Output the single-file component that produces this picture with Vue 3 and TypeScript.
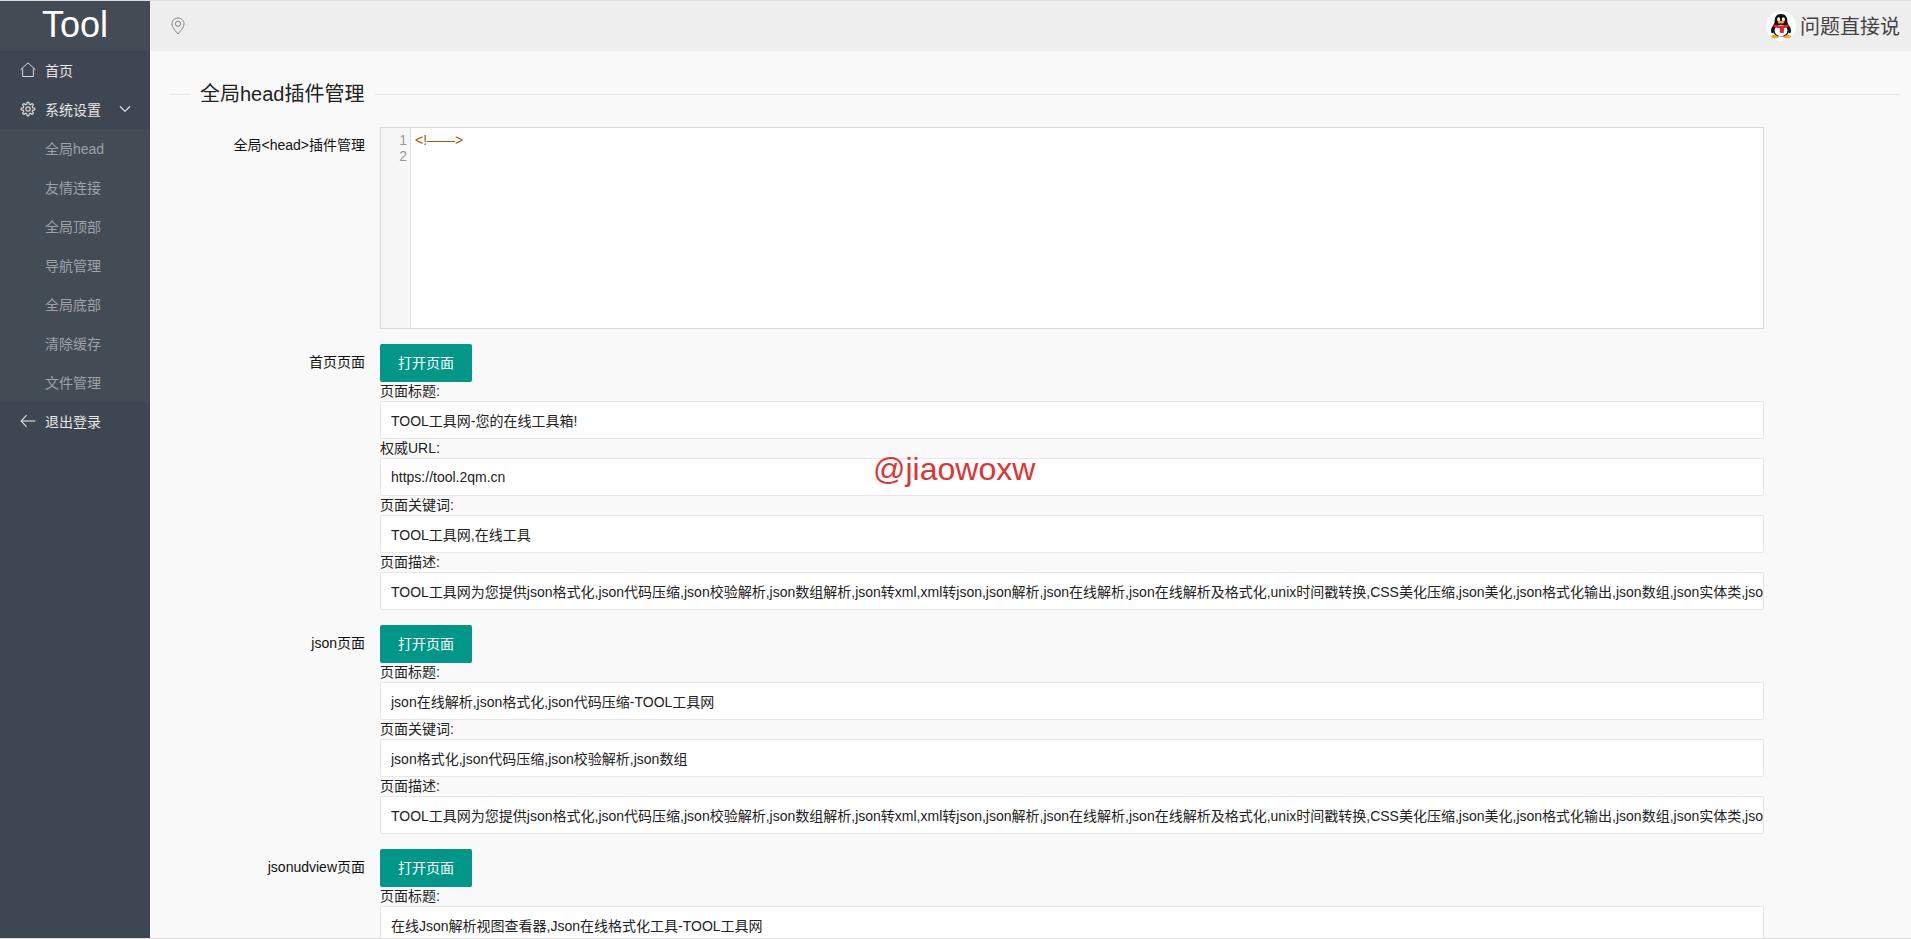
<script setup lang="ts">
interface Field {
  label: string;
  value: string;
}

interface PageGroup {
  name: string;
  fields: Field[];
}

const longDesc =
  'TOOL工具网为您提供json格式化,json代码压缩,json校验解析,json数组解析,json转xml,xml转json,json解析,json在线解析,json在线解析及格式化,unix时间戳转换,CSS美化压缩,json美化,json格式化输出,json数组,json实体类,json在线工具';

const subMenu = ['全局head', '友情连接', '全局顶部', '导航管理', '全局底部', '清除缓存', '文件管理'];

const groups: PageGroup[] = [
  {
    name: '首页页面',
    fields: [
      { label: '页面标题:', value: 'TOOL工具网-您的在线工具箱!' },
      { label: '权威URL:', value: 'https://tool.2qm.cn' },
      { label: '页面关键词:', value: 'TOOL工具网,在线工具' },
      { label: '页面描述:', value: longDesc },
    ],
  },
  {
    name: 'json页面',
    fields: [
      { label: '页面标题:', value: 'json在线解析,json格式化,json代码压缩-TOOL工具网' },
      { label: '页面关键词:', value: 'json格式化,json代码压缩,json校验解析,json数组' },
      { label: '页面描述:', value: longDesc },
    ],
  },
  {
    name: 'jsonudview页面',
    fields: [{ label: '页面标题:', value: '在线Json解析视图查看器,Json在线格式化工具-TOOL工具网' }],
  },
];

// outline of the settings cog, eight rounded teeth
const gearPath = (() => {
  const pts: string[] = [];
  const teeth = 8;
  for (let i = 0; i < teeth; i++) {
    const a = (i / teeth) * Math.PI * 2;
    const step = Math.PI / teeth;
    const p = (r: number, t: number) => `${(8 + r * Math.cos(t)).toFixed(2)} ${(8 + r * Math.sin(t)).toFixed(2)}`;
    pts.push(`${i === 0 ? 'M' : 'L'}${p(5, a - step * 0.6)}`);
    pts.push(`L${p(6.6, a - step * 0.4)}`);
    pts.push(`Q${p(7.4, a)} ${p(6.6, a + step * 0.4)}`);
    pts.push(`L${p(5, a + step * 0.6)}`);
  }
  return pts.join(' ') + ' Z';
})();
</script>

<template>
  <div class="shell">
    <aside class="side">
      <div class="logo">Tool</div>
      <a class="nav-item">
        <svg class="nav-icon" width="16" height="16" viewBox="0 0 16 16" fill="none" stroke="currentColor" stroke-width="1">
          <path d="M0.5 7.8 8 0.8l7.5 7" />
          <path d="M2.6 6.4v8.1h10.8V6.4" />
        </svg>
        <span>首页</span>
      </a>
      <a class="nav-item">
        <svg class="nav-icon" width="16" height="16" viewBox="0 0 16 16" fill="none" stroke="currentColor" stroke-width="1.2">
          <path :d="gearPath" />
          <circle cx="8" cy="8" r="2.2" />
        </svg>
        <span>系统设置</span>
        <svg class="nav-more" width="12" height="8" viewBox="0 0 12 8" fill="none" stroke="currentColor" stroke-width="1.3">
          <path d="M1 1.2 6 6.4l5-5.2" />
        </svg>
      </a>
      <a v-for="item in subMenu" :key="item" class="sub-item">{{ item }}</a>
      <a class="nav-item nav-bottom">
        <svg class="nav-icon" width="16" height="16" viewBox="0 0 16 16" fill="none" stroke="currentColor" stroke-width="1.2">
          <path d="M6.6 2.2 1.2 8l5.4 5.8" />
          <path d="M1.4 8h14" />
        </svg>
        <span>退出登录</span>
      </a>
    </aside>

    <div class="main">
      <header class="top">
        <svg class="loc" width="14" height="18" viewBox="0 0 14 18" fill="none" stroke="currentColor" stroke-width="1">
          <path d="M7 17C4.6 13.8 1 10.6 1 6.8 1 3.4 3.7 1 7 1s6 2.4 6 5.8c0 3.8-3.6 7-6 10.200Z" />
          <circle cx="7" cy="6.8" r="2.6" />
        </svg>
        <div class="ask">
          <span class="qq">
            <svg width="24" height="26" viewBox="0 0 24 26">
              <ellipse cx="6" cy="23.500" rx="4" ry="1.800" fill="#f5a623" />
              <ellipse cx="18" cy="23.500" rx="4" ry="1.800" fill="#f5a623" />
              <path d="M12 1c4.600 0 6.400 3.400 6.400 7.400 0 1.600.6 2.600 1.600 4 1.400 2 2.400 4.600 1.800 6.800-.4 1.400-1.400 1-2.200.2-.8 2.400-3.600 4-7.600 4s-6.800-1.600-7.600-4c-.8.800-1.800 1.200-2.200-.2C1.600 17 2.600 14.400 4 12.400c1-1.400 1.600-2.400 1.600-4C5.600 4.400 7.400 1 12 1Z" fill="#111" />
              <ellipse cx="12" cy="17.500" rx="6.400" ry="5.800" fill="#fff" />
              <ellipse cx="9.600" cy="6.400" rx="1.500" ry="2.100" fill="#fff" />
              <ellipse cx="14.400" cy="6.400" rx="1.500" ry="2.100" fill="#fff" />
              <ellipse cx="12" cy="9.200" rx="3.400" ry="1.400" fill="#f5a623" />
              <path d="M4.600 11.200c4.600 1.800 10.200 1.800 14.800 0l.6 2.400c-1.600.8-3.400 1.200-4.800 1.400l-.2 0-.2 5-4-.2v-4.800C8.200 14.800 6 14.400 4.200 13.400Z" fill="#e8202a" />
            </svg>
          </span>
          <span class="ask-text">问题直接说</span>
        </div>
      </header>

      <div class="content">
        <fieldset class="box">
          <legend>全局head插件管理</legend>

          <div class="form-item">
            <label class="form-label">全局&lt;head&gt;插件管理</label>
            <div class="editor">
              <div class="gutter">
                <div>1</div>
                <div>2</div>
              </div>
              <div class="code">&lt;!——&gt;</div>
            </div>
          </div>

          <div v-for="group in groups" :key="group.name" class="form-item">
            <label class="form-label">{{ group.name }}</label>
            <div class="form-block">
              <button type="button" class="btn">打开页面</button>
              <template v-for="field in group.fields" :key="field.label">
                <div class="field-label">{{ field.label }}</div>
                <input class="input" type="text" readonly :value="field.value" />
              </template>
            </div>
          </div>
        </fieldset>
      </div>
    </div>

    <div class="watermark">@jiaowoxw</div>
  </div>
</template>

<style scoped>
.shell {
  position: relative;
  display: flex;
  height: 939px;
  box-sizing: border-box;
  overflow: hidden;
  border-top: 1px solid #ddd;
  border-bottom: 1px solid #ddd;
  font-family: "Liberation Sans", "Noto Sans CJK SC", sans-serif;
  font-size: 14px;
  color: #222;
}

.side {
  width: 150px;
  flex-shrink: 0;
  background: #3e4651;
}

.logo {
  height: 50px;
  line-height: 48px;
  text-align: center;
  font-size: 36px;
  color: #fff;
  background: #434b55;
}

.nav-item {
  display: flex;
  align-items: center;
  height: 39px;
  box-sizing: border-box;
  padding: 0 0 2px 20px;
  color: #e6e6e6;
}

.nav-icon {
  width: 16px;
  height: 16px;
  margin-right: 9px;
  color: #d8d8d8;
}

.nav-more {
  margin-left: 18px;
  color: #d8d8d8;
}

.sub-item {
  display: block;
  height: 39px;
  line-height: 41px;
  padding-left: 45px;
  background: #434b55;
  color: #9ea2a8;
}

.main {
  flex: 1;
  min-width: 0;
  display: flex;
  flex-direction: column;
  background: #f9f9f9;
}

.top {
  height: 50px;
  flex-shrink: 0;
  display: flex;
  align-items: center;
  justify-content: space-between;
  padding: 0 11px 0 21px;
  background: #eee;
}

.loc {
  color: #7c8288;
}

.ask {
  display: flex;
  align-items: center;
}

.qq {
  width: 30px;
  height: 30px;
  margin-right: 4px;
  border-radius: 50%;
  background: #fff;
  display: flex;
  align-items: center;
  justify-content: center;
}

.ask-text {
  padding-bottom: 2px;
  font-size: 20px;
  color: #444;
}

.content {
  flex: 1;
  overflow: hidden;
  padding: 0 11px 0 20px;
}

.box {
  margin: 30px 0 0;
  padding: 20px 0 0;
  border: 0;
  border-top: 1px solid #e6e6e6;
  min-width: 0;
}

.box legend {
  margin-left: 20px;
  padding: 0 10px;
  font-size: 20px;
  line-height: 26px;
  color: #222;
}

.form-item {
  display: flex;
  margin-bottom: 15px;
}

.form-label {
  width: 195px;
  flex-shrink: 0;
  padding: 8px 15px 10px 0;
  line-height: 20px;
  text-align: right;
  color: #111;
}

.form-block {
  width: 1384px;
  flex-shrink: 0;
}

.editor {
  width: 1384px;
  height: 202px;
  flex-shrink: 0;
  box-sizing: border-box;
  display: flex;
  border: 1px solid #d9d9d9;
  background: #fff;
  line-height: 16px;
}

.gutter {
  width: 30px;
  box-sizing: border-box;
  padding: 4px 3px 0 0;
  text-align: right;
  color: #999;
  background: #f7f7f7;
  border-right: 1px solid #ddd;
}

.code {
  padding: 4px 0 0 4px;
  color: #a50;
}

.btn {
  display: block;
  width: 92px;
  height: 38px;
  padding: 0 0 2px;
  border: 0;
  border-radius: 2px;
  background: #009688;
  color: #fff;
  font: inherit;
  cursor: pointer;
}

.field-label {
  height: 19px;
  line-height: 19px;
  color: #222;
}

.input {
  display: block;
  width: 100%;
  height: 38px;
  box-sizing: border-box;
  padding: 0 0 0 10px;
  border: 1px solid #e6e6e6;
  border-radius: 2px;
  background: #fff;
  color: #222;
  font: inherit;
  outline: none;
}

.watermark {
  position: absolute;
  left: 873px;
  top: 448px;
  font-size: 32px;
  line-height: 40px;
  color: #e03434;
  pointer-events: none;
}
</style>

<style>
html,
body {
  margin: 0;
  overflow: hidden;
}
</style>
